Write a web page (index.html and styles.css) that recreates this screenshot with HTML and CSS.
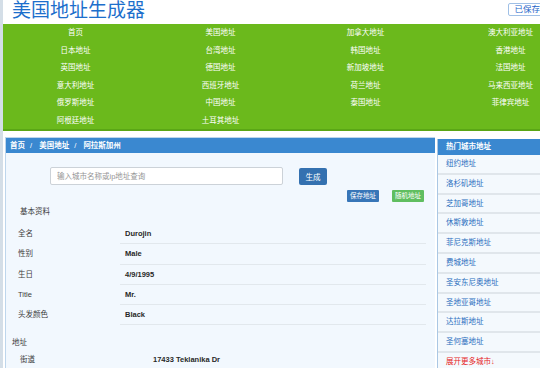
FILE: index.html
```html
<!DOCTYPE html>
<html lang="zh-CN">
<head>
    <meta charset="UTF-8">
    <meta name="viewport" content="width=device-width, initial-scale=1.0">
    <title>美国地址生成器</title>
    <link rel="stylesheet" href="styles.css">
</head>
<body>
<div class="page">
    <div class="strip"></div>
    <div class="wrap">
        <div class="header">
            <div class="logo">美国地址生成器</div>
            <a class="saved" href="#">已保存地址</a>
        </div>
        <div class="nav">
            <a href="#">首页</a>
            <a href="#">美国地址</a>
            <a href="#">加拿大地址</a>
            <a href="#">澳大利亚地址</a>
            <a href="#">日本地址</a>
            <a href="#">台湾地址</a>
            <a href="#">韩国地址</a>
            <a href="#">香港地址</a>
            <a href="#">英国地址</a>
            <a href="#">德国地址</a>
            <a href="#">新加坡地址</a>
            <a href="#">法国地址</a>
            <a href="#">意大利地址</a>
            <a href="#">西班牙地址</a>
            <a href="#">荷兰地址</a>
            <a href="#">马来西亚地址</a>
            <a href="#">俄罗斯地址</a>
            <a href="#">中国地址</a>
            <a href="#">泰国地址</a>
            <a href="#">菲律宾地址</a>
            <a href="#">阿根廷地址</a>
            <a href="#">土耳其地址</a>
        </div>
        <div class="content">
            <div class="main">
                <div class="crumb">
                    <a href="#">首页</a><span class="sep">/</span>
                    <a href="#">美国地址</a><span class="sep">/</span>
                    <span>阿拉斯加州</span>
                </div>
                <div class="search">
                    <input type="text" placeholder="输入城市名称或ip地址查询">
                    <button class="gen">生成</button>
                </div>
                <div class="actions">
                    <button class="save">保存地址</button>
                    <button class="rand">随机地址</button>
                </div>
                <div class="sect">基本资料</div>
                <div class="info">
                    <div class="lab">全名</div><div class="val">Durojin</div>
                    <div class="lab">性别</div><div class="val">Male</div>
                    <div class="lab">生日</div><div class="val">4/9/1995</div>
                    <div class="lab">Title</div><div class="val">Mr.</div>
                    <div class="lab">头发颜色</div><div class="val">Black</div>
                </div>
                <div class="sect addr">地址</div>
                <div class="info street">
                    <div class="lab">街道</div><div class="val">17433 Teklanika Dr</div>
                </div>
            </div>
            <div class="side">
                <div class="side-title">热门城市地址</div>
                <a href="#">纽约地址</a>
                <a href="#">洛杉矶地址</a>
                <a href="#">芝加哥地址</a>
                <a href="#">休斯敦地址</a>
                <a href="#">菲尼克斯地址</a>
                <a href="#">费城地址</a>
                <a href="#">圣安东尼奥地址</a>
                <a href="#">圣地亚哥地址</a>
                <a href="#">达拉斯地址</a>
                <a href="#">圣何塞地址</a>
                <a href="#" class="more">展开更多城市↓</a>
            </div>
        </div>
    </div>
</div>
</body>
</html>
```

FILE: styles.css
```css
*{
    margin: 0;
    padding: 0;
    box-sizing: border-box;
    font-family: "Liberation Sans", "Noto Sans CJK SC", sans-serif;
}
html, body{
    overflow: hidden;
    background: white;
}
a{
    text-decoration: none;
}
.page{
    display: flex;
    width: 590px;
}
.strip{
    width: 3px;
    background-color: rgb(212, 222, 231);
    min-height: 368px;
}
.wrap{
    width: 580px;
}
.header{
    height: 24px;
    display: flex;
    align-items: flex-start;
    justify-content: space-between;
}
.logo{
    margin-left: 9px;
    font-size: 19px;
    line-height: 22px;
    color: rgb(29, 111, 204);
}
.saved{
    margin-top: 3px;
    margin-right: 20px;
    height: 13px;
    padding: 0 5px;
    border: 1px solid rgb(160, 192, 230);
    border-radius: 2px;
    font-size: 8.5px;
    line-height: 11px;
    color: rgb(29, 100, 200);
}
.nav{
    display: grid;
    grid-template-columns: repeat(4, 145px);
    grid-auto-rows: 17.6px;
    background-color: rgb(107, 185, 28);
    border-bottom: 2px solid rgb(90, 166, 22);
    height: 107px;
}
.nav a{
    color: white;
    font-size: 7.5px;
    line-height: 17.6px;
    text-align: center;
}
.content{
    display: flex;
    margin-top: 6px;
}
.main{
    width: 430px;
    margin-left: 2px;
    height: 240px;
    background-color: rgb(242, 248, 254);
    border-left: 1px solid rgb(190, 214, 236);
    border-top: 1px solid rgb(190, 214, 236);
}
.crumb{
    height: 15px;
    background-color: rgb(58, 136, 208);
    padding-left: 4px;
    font-size: 7.5px;
    line-height: 15px;
    font-weight: bold;
    color: white;
}
.crumb a{
    color: white;
}
.sep{
    margin: 0 5px;
    font-weight: normal;
}
.search{
    display: flex;
    align-items: center;
    gap: 16px;
    margin-top: 14px;
    padding-left: 44px;
}
.search input{
    width: 233px;
    height: 18px;
    border: 1px solid rgb(204, 210, 216);
    border-radius: 2px;
    padding-left: 6px;
    font-size: 7.5px;
    background: white;
}
.search input::placeholder{
    color: rgb(150, 150, 150);
}
.gen{
    width: 28px;
    height: 17px;
    border: none;
    border-radius: 2px;
    background-color: rgb(52, 113, 176);
    color: white;
    font-size: 7.5px;
}
.actions{
    display: flex;
    justify-content: flex-end;
    gap: 13px;
    padding-right: 11px;
    margin-top: 5px;
}
.actions button{
    width: 32px;
    height: 12px;
    border: none;
    border-radius: 1px;
    color: white;
    font-size: 6.5px;
    line-height: 12px;
}
.save{
    background-color: rgb(56, 118, 184);
}
.rand{
    background-color: rgb(96, 190, 96);
}
.sect{
    padding-left: 14px;
    margin-top: 3px;
    font-size: 7.5px;
    line-height: 14px;
    color: rgb(60, 60, 60);
}
.info{
    display: grid;
    grid-template-columns: 114px 306px;
    grid-auto-rows: 20.3px;
    margin-top: 5px;
}
.lab{
    padding-left: 12px;
    font-size: 7.5px;
    line-height: 20px;
    color: rgb(60, 60, 60);
}
.val{
    padding-left: 5px;
    font-size: 7.5px;
    line-height: 20px;
    font-weight: bold;
    color: rgb(40, 40, 40);
    border-bottom: 1px solid rgb(226, 232, 237);
}
.addr{
    padding-left: 6px;
    margin-top: 11px;
}
.street{
    grid-template-columns: 142px 278px;
    margin-top: 1px;
    grid-auto-rows: 18px;
}
.street .lab, .street .val{
    line-height: 18px;
}
.street .lab{
    padding-left: 14px;
}
.side{
    display: flex;
    flex-direction: column;
    width: 145px;
    margin-left: 2px;
    margin-top: 2px;
    border-left: 1px solid rgb(170, 199, 228);
    background-color: rgb(244, 249, 253);
}
.side-title{
    height: 16px;
    background-color: rgb(58, 136, 208);
    color: white;
    font-weight: bold;
    font-size: 7.5px;
    line-height: 16px;
    padding-left: 8px;
}
.side a{
    height: 19.8px;
    padding-left: 8px;
    font-size: 7.5px;
    line-height: 18px;
    color: rgb(42, 110, 190);
    border-bottom: 2px solid rgb(224, 230, 235);
}
.side a.more{
    color: rgb(230, 30, 30);
}
```
